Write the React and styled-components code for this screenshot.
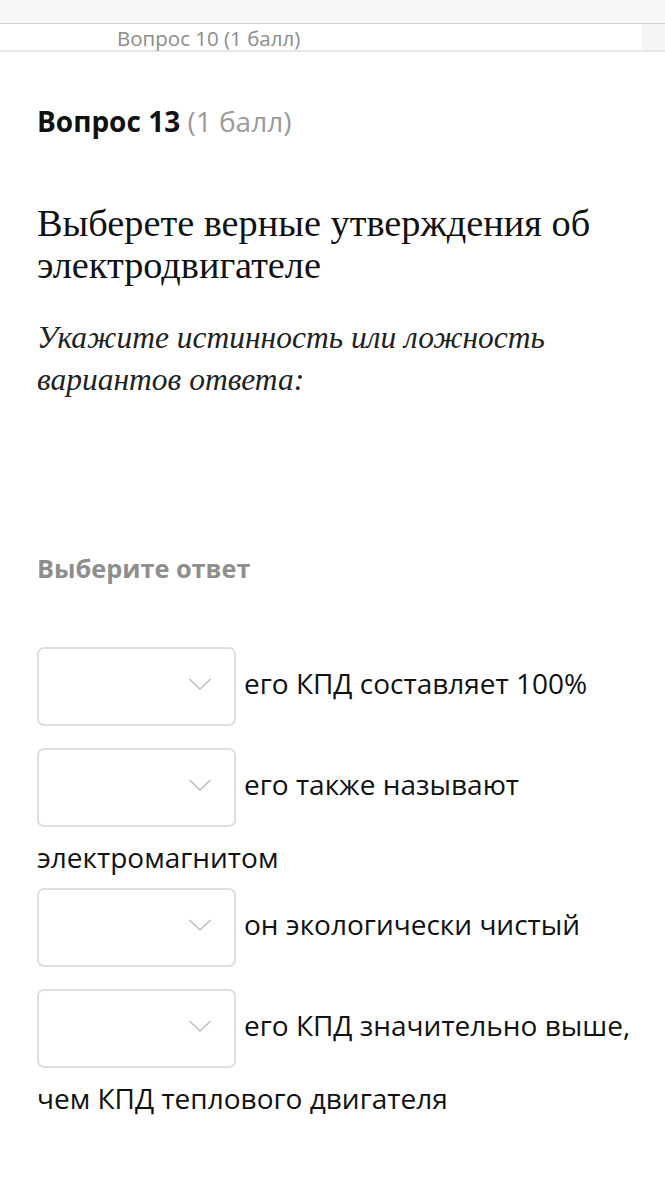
import React from 'react';
import styled, { createGlobalStyle } from 'styled-components';

const GlobalStyle = createGlobalStyle`
  html, body {
    margin: 0;
    padding: 0;
    background: #fff;
  }
  body {
    font-family: "Open Sans", "Noto Sans", sans-serif;
    color: #111;
  }
`;

/* --------------------  navigation strip  --------------------*/

const TopStrip = styled.div`
  height: 23px;
  background: #f7f7f7;
  border-bottom: 1px solid #cfcfcf;
`;

const PrevRow = styled.div`
  display: flex;
  height: 26px;
  border-bottom: 2px solid #e6e6e6;
  background: #fff;
`;

const PrevLabel = styled.div`
  flex: 1;
  padding-left: 117px;
  font-size: 20.5px;
  line-height: 28px;
  color: #8c8c8c;
`;

const PrevSide = styled.div`
  width: 23px;
  background: #f4f4f4;
`;

/* --------------------  question body  --------------------*/

const Content = styled.div`
  padding: 0 18px 0 37px;
`;

const QuestionHead = styled.h3`
  margin: 0;
  padding-top: 50px;
  font-size: 28px;
  line-height: 38px;
  font-weight: 700;
  color: #111;
`;

const Points = styled.span`
  font-weight: 400;
  color: #9a9a9a;
`;

const Prompt = styled.div`
  margin-top: 62px;
  padding-right: 19px;
  font-family: "Liberation Serif", "DejaVu Serif", serif;
  font-size: 38.3px;
  line-height: 42px;
  color: #111;
`;

const Hint = styled.div`
  margin-top: 31px;
  padding-right: 19px;
  font-family: "Liberation Serif", "DejaVu Serif", serif;
  font-style: italic;
  font-size: 31.5px;
  line-height: 42px;
  color: #222;
`;

const AnswerLabel = styled.div`
  margin-top: 150px;
  font-size: 25.3px;
  line-height: 34px;
  font-weight: 700;
  color: #8e8e8e;
`;

const Options = styled.div`
  margin-top: 51px;
`;

const Option = styled.div`
  font-size: 28px;
  line-height: 39px;
  color: #111;
`;

const Select = styled.span`
  display: inline-block;
  box-sizing: border-box;
  vertical-align: middle;
  position: relative;
  width: 199px;
  height: 79px;
  margin: 11px 8px 11px 0;
  border: 2px solid #dedede;
  border-radius: 7px;
  background: #fff;
`;

const Chevron = styled.svg`
  position: absolute;
  right: 22px;
  top: 27px;
`;

const Dropdown = () => (
  <Select>
    <Chevron width="24" height="16" viewBox="0 0 24 16">
      <path d="M1.5 3 L12 13 L22.5 3" fill="none" stroke="#bdbdbd" strokeWidth="1.6" />
    </Chevron>
  </Select>
);

const statements = [
  'его КПД составляет 100%',
  'его также называют электромагнитом',
  'он экологически чистый',
  'его КПД значительно выше, чем КПД теплового двигателя',
];

export default function App() {
  return (
    <>
      <GlobalStyle />
      <TopStrip />
      <PrevRow>
        <PrevLabel>Вопрос 10 (1 балл)</PrevLabel>
        <PrevSide />
      </PrevRow>
      <Content>
        <QuestionHead>
          Вопрос 13 <Points>(1 балл)</Points>
        </QuestionHead>
        <Prompt>Выберете верные утверждения об электродвигателе</Prompt>
        <Hint>Укажите истинность или ложность вариантов ответа:</Hint>
        <AnswerLabel>Выберите ответ</AnswerLabel>
        <Options>
          {statements.map(text => (
            <Option key={text}>
              <Dropdown />
              {text}
            </Option>
          ))}
        </Options>
      </Content>
    </>
  );
}
